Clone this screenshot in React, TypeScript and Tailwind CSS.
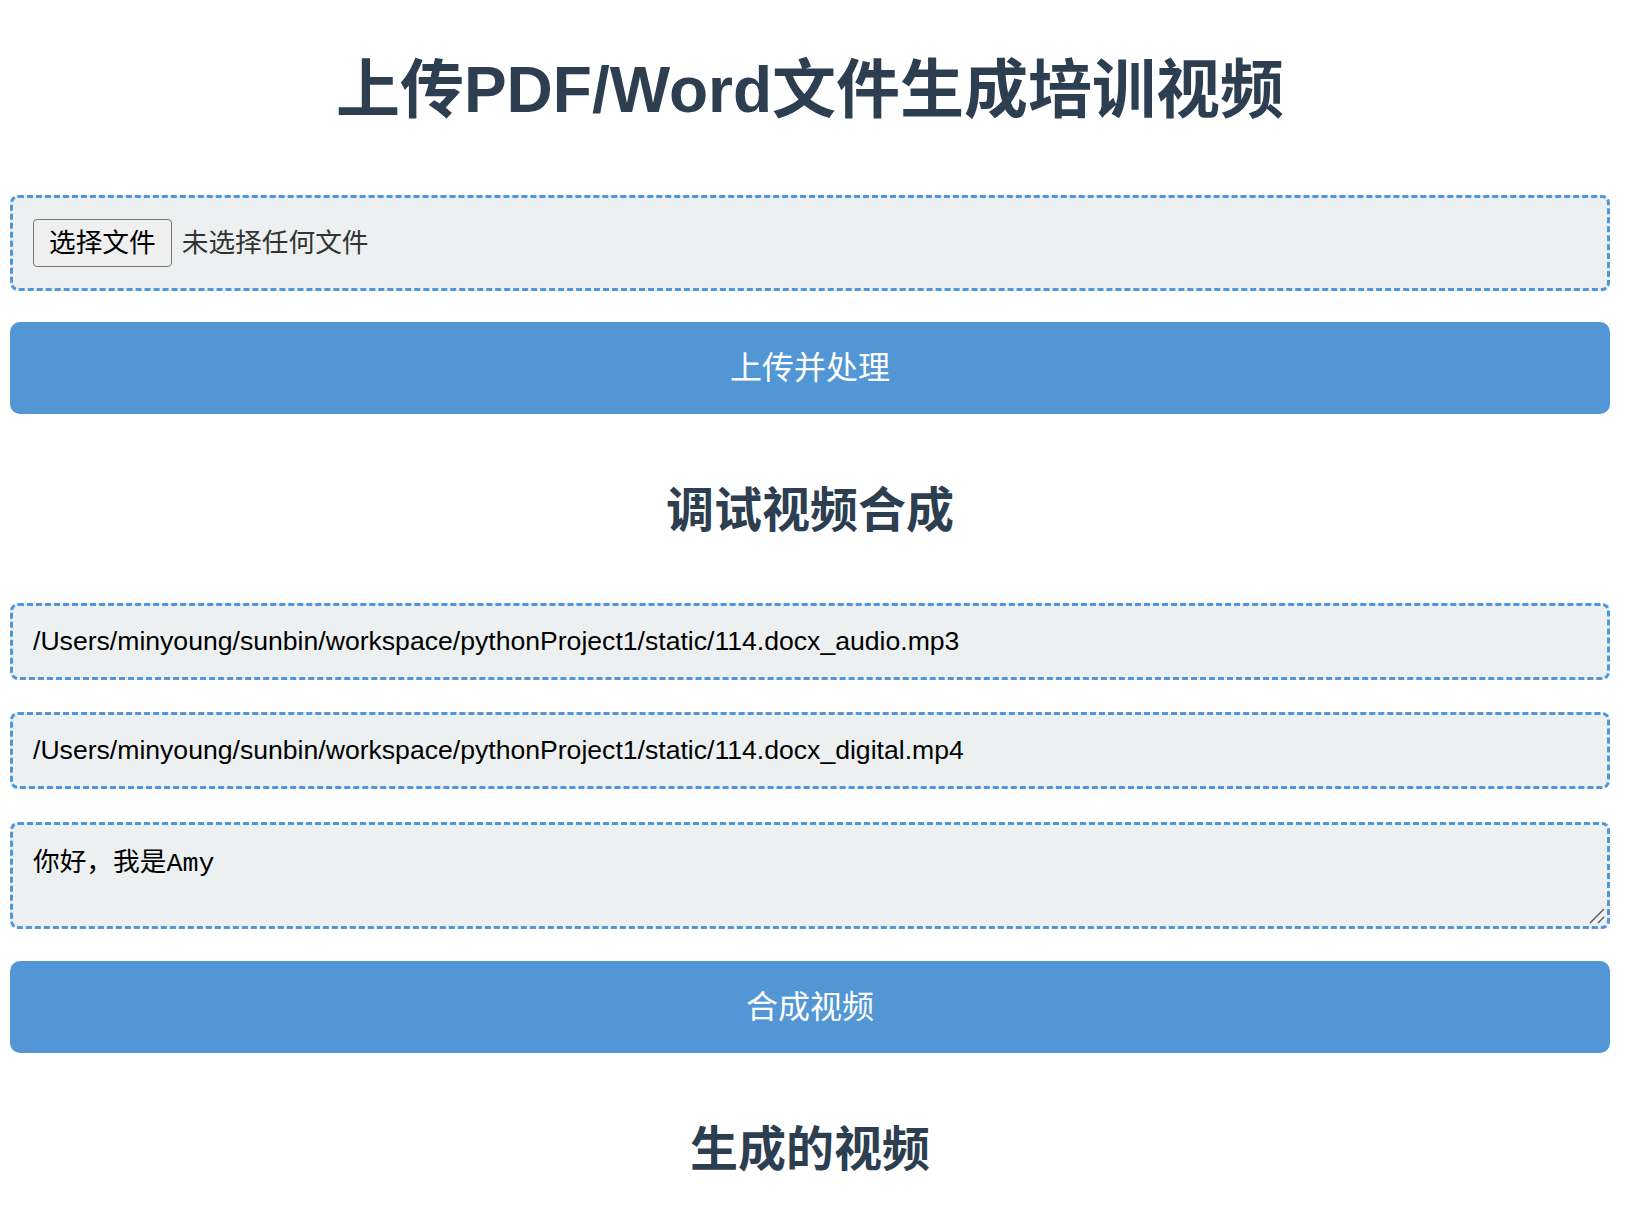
import { useState } from "react";

const sans = { fontFamily: '"Liberation Sans", "Noto Sans CJK SC", sans-serif' };
const mono = { fontFamily: '"Liberation Mono", "Noto Sans CJK SC", monospace' };

export default function App() {
  const [audio, setAudio] = useState(
    "/Users/minyoung/sunbin/workspace/pythonProject1/static/114.docx_audio.mp3"
  );
  const [video, setVideo] = useState(
    "/Users/minyoung/sunbin/workspace/pythonProject1/static/114.docx_digital.mp4"
  );
  const [text, setText] = useState("你好，我是Amy");

  const fieldClass =
    "w-full border-[3px] border-dashed border-[#5096d8] bg-[#ecf0f1] rounded-[8px] px-[20px] outline-none";
  const btnClass =
    "w-full h-[92px] bg-[#5296d5] text-white text-[32px] rounded-[10px] flex items-center justify-center";

  return (
    <div className="min-h-screen bg-white pl-[10px] pr-[30px] pt-[52px] pb-[40px]" style={sans}>
      {/* 上传区 */}
      <h1 className="text-center text-[64px] leading-[76px] font-bold text-[#2c3e50]">
        上传PDF/Word文件生成培训视频
      </h1>

      <div className={`${fieldClass} mt-[67px] h-[96px] flex items-center gap-[10px]`}>
        <span className="h-[48px] px-[15px] flex items-center border-[1.5px] border-[#767676] rounded-[4px] bg-[#efefef] text-[26.7px] text-black">
          选择文件
        </span>
        <span className="text-[26.7px] text-[#333333]">未选择任何文件</span>
      </div>

      <button className={`${btnClass} mt-[31px]`}>上传并处理</button>

      {/* 调试 */}
      <h2 className="mt-[69px] text-center text-[48px] leading-[56px] font-bold text-[#2c3e50]">
        调试视频合成
      </h2>

      <input
        className={`${fieldClass} mt-[64px] h-[77px] text-[26.6px] text-black block`}
        style={sans}
        value={audio}
        onChange={(e) => setAudio(e.target.value)}
      />
      <input
        className={`${fieldClass} mt-[32px] h-[77px] text-[26.6px] text-black block`}
        style={sans}
        value={video}
        onChange={(e) => setVideo(e.target.value)}
      />
      <div className="relative mt-[33px]">
        <textarea
          className={`${fieldClass} h-[107px] pt-[24px] pb-[16px] text-[26.7px] leading-[30px] text-black block resize-none`}
          style={mono}
          value={text}
          onChange={(e) => setText(e.target.value)}
        />
        {/* 右下角拖拽手柄 */}
        <svg
          className="absolute right-[5px] bottom-[5px] pointer-events-none"
          width="16"
          height="16"
          viewBox="0 0 16 16"
        >
          <path d="M15 1 L1 15 M15 9 L9 15" stroke="#555555" strokeWidth="1.4" />
        </svg>
      </div>

      <button className={`${btnClass} mt-[32px]`}>合成视频</button>

      <h2 className="mt-[69px] text-center text-[48px] leading-[56px] font-bold text-[#2c3e50]">
        生成的视频
      </h2>
    </div>
  );
}
